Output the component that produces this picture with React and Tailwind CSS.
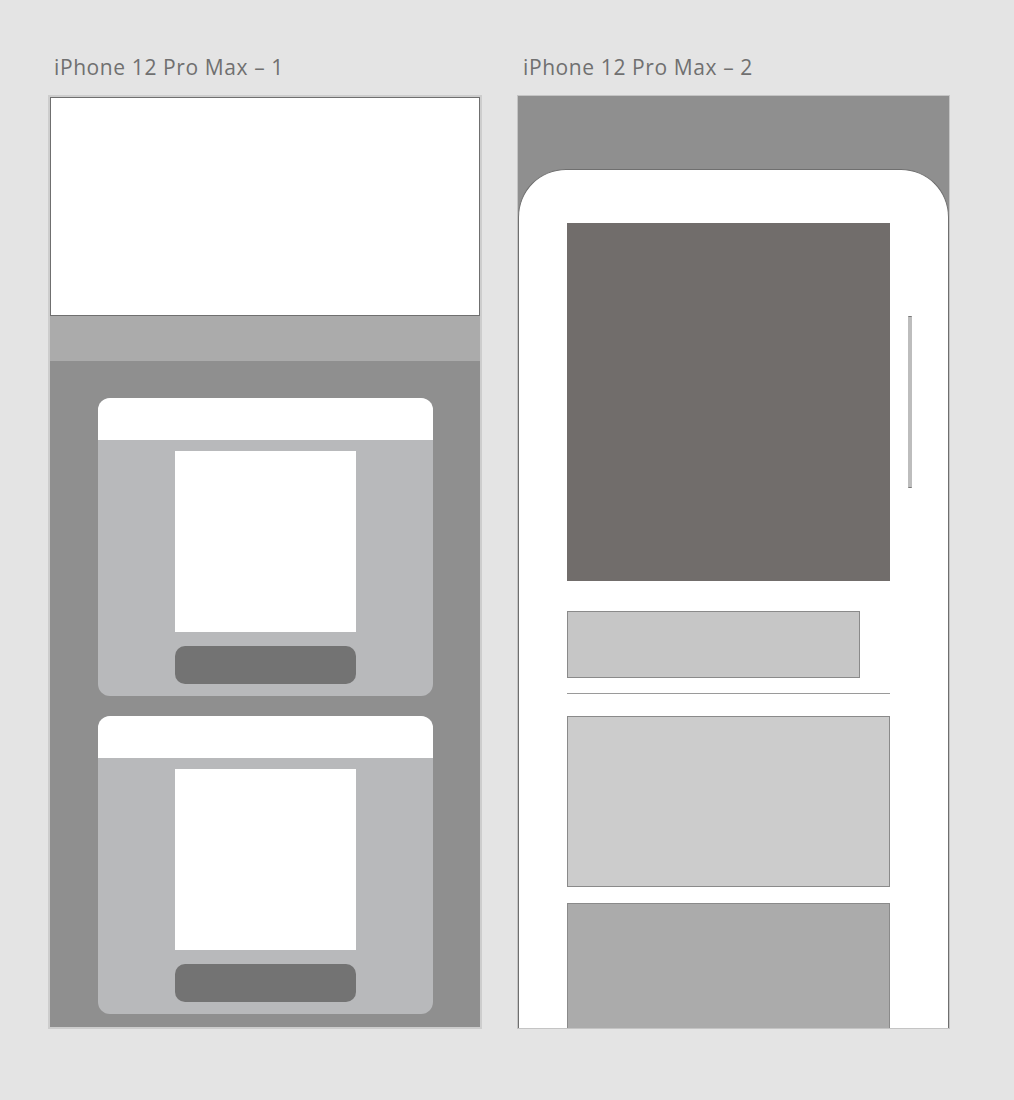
export default function App() {
  return (
    <div className="w-[1014px] h-[1100px] bg-[#e4e4e4] flex gap-[35px] pl-[48px] pt-[54px] font-['Open_Sans',sans-serif]">
      {/* Frame 1 */}
      <div className="flex flex-col">
        <p className="pl-[6px] h-[41px] text-[21px] leading-[26px] tracking-[0.6px] text-[#707070]">iPhone 12 Pro Max – 1</p>
        <div className="w-[434px] h-[934px] border-2 border-[#cdcdcd] bg-[#8f8f8f] flex flex-col overflow-hidden">
          <div className="h-[219px] bg-white border border-[#6f6f6f]" />
          <div className="h-[45px] bg-[#ababab]" />
          <div className="flex flex-col items-start pl-[48px] pt-[37px] gap-[20px]">
            <Card />
            <Card />
          </div>
        </div>
      </div>

      {/* Frame 2 */}
      <div className="flex flex-col">
        <p className="pl-[6px] h-[41px] text-[21px] leading-[26px] tracking-[0.6px] text-[#707070]">iPhone 12 Pro Max – 2</p>
        <div className="w-[433px] h-[934px] border border-[#c4c4c4] bg-[#8f8f8f] overflow-hidden flex flex-col">
          <div className="h-[73px] shrink-0" />
          <div className="relative flex-1 bg-white rounded-t-[48px] border border-b-0 border-[#6f6f6f] flex flex-col pl-[48px] pt-[53px]">
            <div className="w-[323px] h-[358px] bg-[#716d6b]" />
            <div className="mt-[30px] w-[293px] h-[67px] bg-[#c6c6c6] border border-[#8a8a8a]" />
            <div className="mt-[15px] w-[323px] h-px bg-[#9a9a9a]" />
            <div className="mt-[22px] w-[323px] h-[171px] bg-[#cccccc] border border-[#8a8a8a]" />
            <div className="mt-[16px] w-[323px] h-[140px] bg-[#ababab] border border-[#8a8a8a]" />
            {/* scrollbar */}
            <div className="absolute left-[389px] top-[146px] w-[4px] h-[172px] bg-[#bdbdbd] border-y border-[#7a7a7a] rounded-[1px]" />
          </div>
        </div>
      </div>
    </div>
  )
}

function Card() {
  return (
    <div className="w-[335px] rounded-[12px] overflow-hidden bg-[#b8b9bb] flex flex-col">
      <div className="h-[42px] bg-white" />
      <div className="flex flex-col items-center pt-[11px] pb-[12px] gap-[14px]">
        <div className="w-[181px] h-[181px] bg-white" />
        <div className="w-[181px] h-[38px] rounded-[10px] bg-[#737373]" />
      </div>
    </div>
  )
}
